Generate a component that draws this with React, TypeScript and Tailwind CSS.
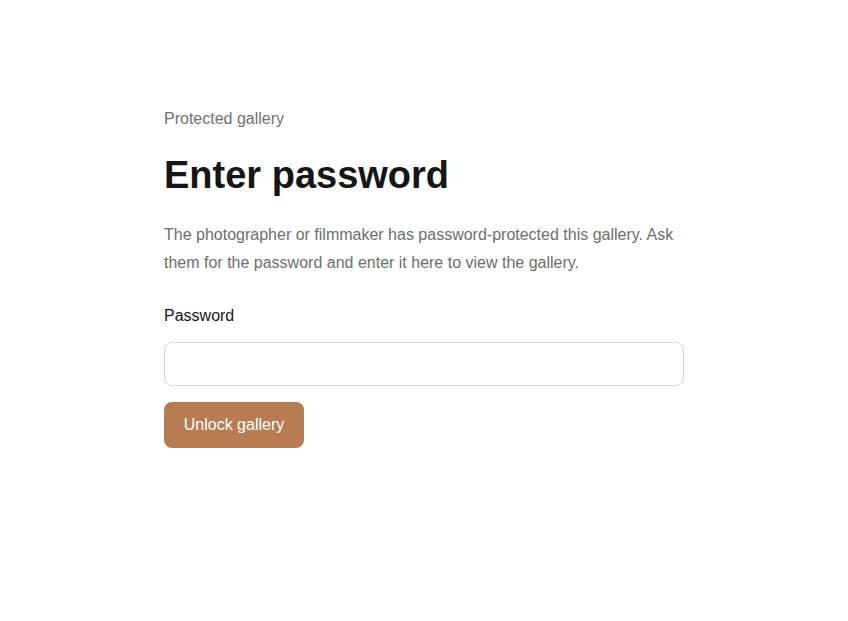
export default function App() {
  return (
    <div className="min-h-screen bg-white font-['Liberation_Sans',Arial,sans-serif]">
      <div className="mx-auto w-[520px] pt-[107px]">
        <p className="text-base leading-6 text-[#717171]">Protected gallery</p>
        <h1 className="mt-[21px] text-[38px] leading-[46px] font-bold text-[#161616]">Enter password</h1>
        <p className="mt-[23px] text-base leading-7 text-[#6e6e6e]">
          The photographer or filmmaker has password-protected this gallery. Ask them for the password and enter it here to view the gallery.
        </p>
        <form onSubmit={(e) => e.preventDefault()}>
          <label htmlFor="pw" className="mt-[27px] block text-base leading-6 text-[#161616]">
            Password
          </label>
          <input
            id="pw"
            type="password"
            className="mt-[14px] block h-[44px] w-full rounded-lg border border-[#d6d6d6] bg-white px-3 text-base outline-none"
          />
          <button
            type="submit"
            className="mt-4 h-[46px] w-[140px] rounded-lg bg-[#b77c51] text-base text-white"
          >
            Unlock gallery
          </button>
        </form>
      </div>
    </div>
  );
}
